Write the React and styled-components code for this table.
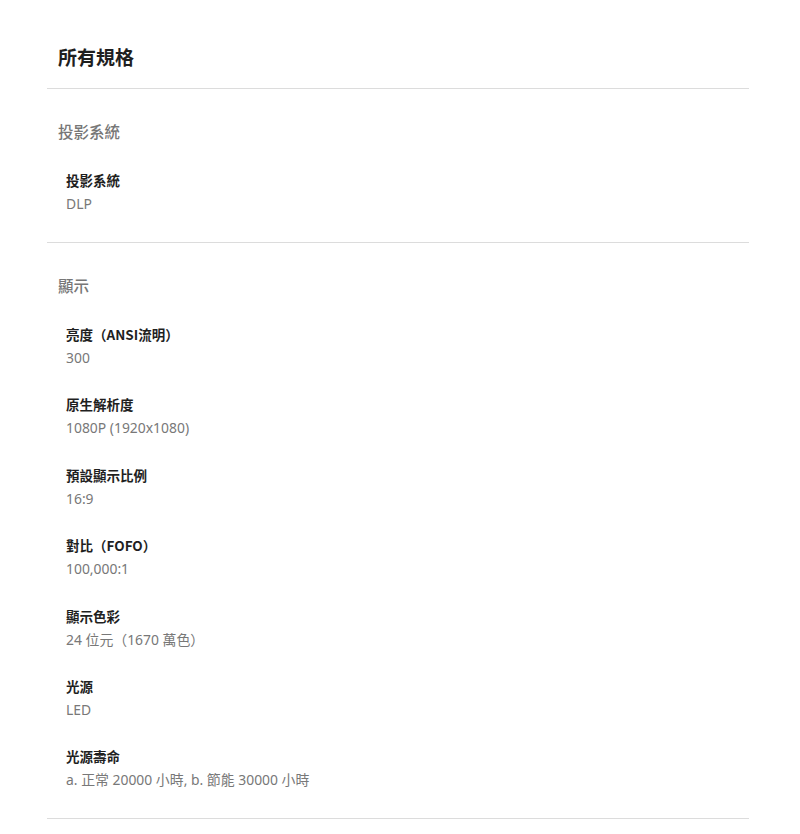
import styled, { createGlobalStyle } from "styled-components";

const GlobalStyle = createGlobalStyle`
  html, body {
    margin: 0;
    padding: 0;
    background: #fff;
  }
  body {
    font-family: "Noto Sans CJK TC", "Noto Sans", sans-serif;
  }
`;

const Page = styled.div`
  padding: 0 51px 0 47px;
`;

const Header = styled.div`
  padding: 43px 11px 17px;
  border-bottom: 1px solid #dcdcdc;
`;

const Title = styled.h1`
  margin: 0;
  font-size: 19px;
  line-height: 28px;
  font-weight: 700;
  color: #1f1f1f;
`;

const Section = styled.section`
  padding: 31px 0 28px;
  border-bottom: 1px solid #dcdcdc;
`;

const SectionTitle = styled.h2`
  margin: 0 11px 28px;
  font-size: 15.5px;
  line-height: 22px;
  font-weight: 500;
  color: #777;
`;

const List = styled.dl`
  margin: 0;
  padding: 0 19px;
  display: flex;
  flex-direction: column;
  gap: 26.4px;
`;

const Item = styled.div`
  display: flex;
  flex-direction: column;
  gap: 4px;
`;

const Label = styled.dt`
  font-size: 13.5px;
  line-height: 20px;
  font-weight: 700;
  color: #1f1f1f;
`;

const Value = styled.dd`
  margin: 0;
  font-family: "Noto Sans", "Noto Sans CJK TC", sans-serif;
  font-size: 13.9px;
  line-height: 20px;
  color: #787878;
`;

const specs = [
  {
    title: "投影系統",
    items: [["投影系統", "DLP"]],
  },
  {
    title: "顯示",
    items: [
      ["亮度（ANSI流明）", "300"],
      ["原生解析度", "1080P (1920x1080)"],
      ["預設顯示比例", "16:9"],
      ["對比（FOFO）", "100,000:1"],
      ["顯示色彩", "24 位元（1670 萬色）"],
      ["光源", "LED"],
      ["光源壽命", "a. 正常 20000 小時, b. 節能 30000 小時"],
    ],
  },
];

export default function App() {
  return (
    <Page>
      <GlobalStyle />
      <Header>
        <Title>所有規格</Title>
      </Header>
      {specs.map((section) => (
        <Section key={section.title}>
          <SectionTitle>{section.title}</SectionTitle>
          <List>
            {section.items.map(([label, value]) => (
              <Item key={label}>
                <Label>{label}</Label>
                <Value>{value}</Value>
              </Item>
            ))}
          </List>
        </Section>
      ))}
    </Page>
  );
}
